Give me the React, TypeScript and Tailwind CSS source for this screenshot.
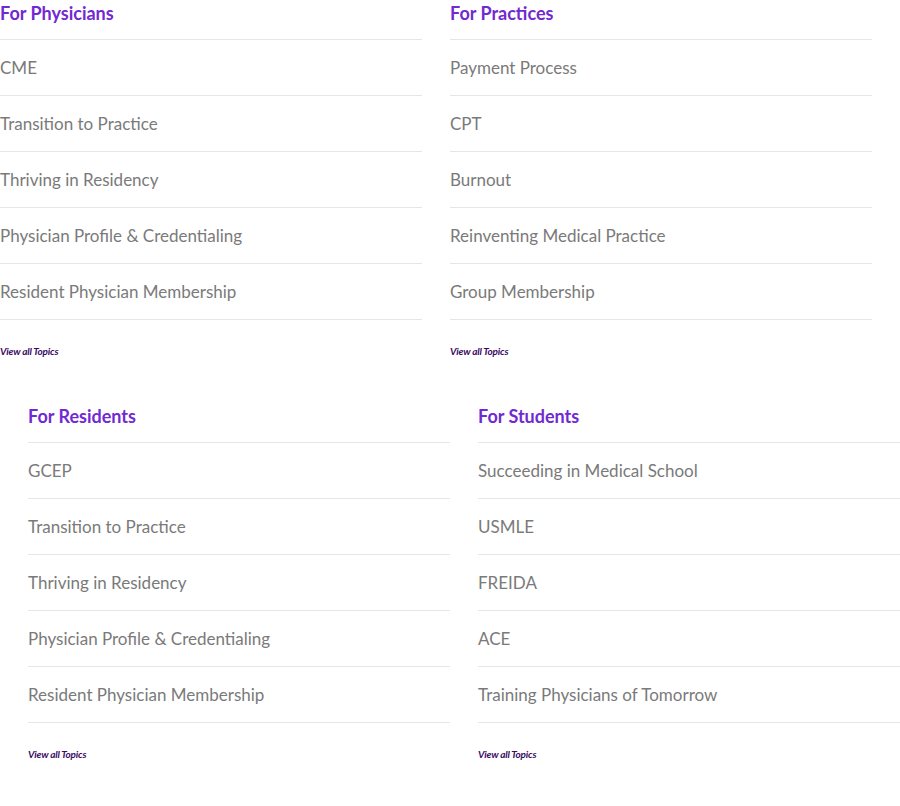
import React from "react";

type Section = { title: string; items: string[] };

const top: Section[] = [
  {
    title: "For Physicians",
    items: [
      "CME",
      "Transition to Practice",
      "Thriving in Residency",
      "Physician Profile & Credentialing",
      "Resident Physician Membership",
    ],
  },
  {
    title: "For Practices",
    items: [
      "Payment Process",
      "CPT",
      "Burnout",
      "Reinventing Medical Practice",
      "Group Membership",
    ],
  },
];

const bottom: Section[] = [
  {
    title: "For Residents",
    items: [
      "GCEP",
      "Transition to Practice",
      "Thriving in Residency",
      "Physician Profile & Credentialing",
      "Resident Physician Membership",
    ],
  },
  {
    title: "For Students",
    items: [
      "Succeeding in Medical School",
      "USMLE",
      "FREIDA",
      "ACE",
      "Training Physicians of Tomorrow",
    ],
  },
];

function Block({ s }: { s: Section }) {
  return (
    <div className="w-[422px]">
      <div className="h-[39px] text-[18px] leading-[26px] font-bold text-[#7129d1]">{s.title}</div>
      <ul className="border-b border-[#e6e6e6]">
        {s.items.map((it) => (
          <li
            key={it}
            className="h-[56px] border-t border-[#e6e6e6] flex items-center text-[17px] text-[#7a7a7a]"
          >
            {it}
          </li>
        ))}
      </ul>
      <div className="mt-[25px] text-[10px] leading-[12px] italic font-bold tracking-[-0.2px] text-[#3a0a63]">
        View all Topics
      </div>
    </div>
  );
}

export default function App() {
  return (
    <div
      className="w-[900px] h-[806px] bg-white"
      style={{ fontFamily: "Lato, 'Open Sans', sans-serif" }}
    >
      <div className="flex gap-[28px]">
        {top.map((s) => (
          <Block key={s.title} s={s} />
        ))}
      </div>
      <div className="flex gap-[28px] pl-[28px] mt-[46px]">
        {bottom.map((s) => (
          <Block key={s.title} s={s} />
        ))}
      </div>
    </div>
  );
}
